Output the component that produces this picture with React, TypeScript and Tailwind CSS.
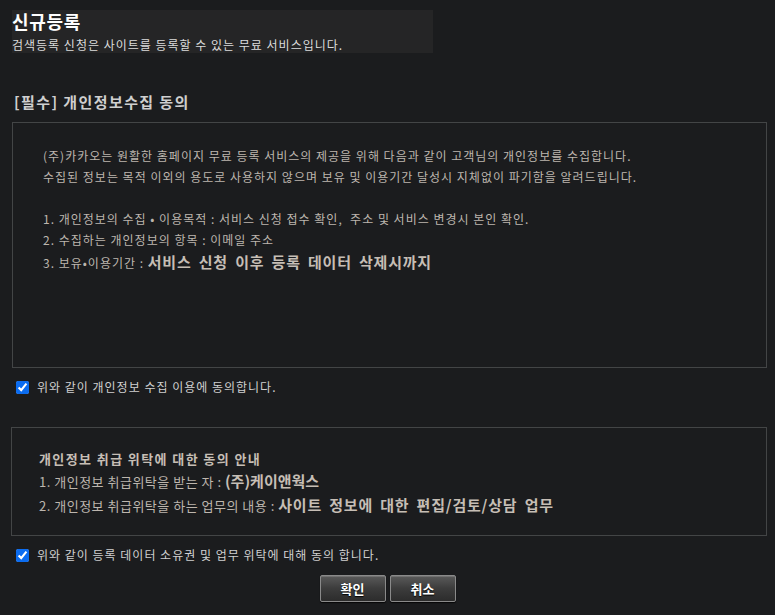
import React from "react";

const font = "font-['Noto_Sans_CJK_KR','Noto_Sans',sans-serif]";

const Btn = ({ label }: { label: string }) => (
  <button
    type="button"
    className="h-[27px] w-[66px] rounded-[2px] border border-[#8a8a8a] bg-gradient-to-b from-[#5a5a5a] via-[#3c3c3c] to-[#2c2c2c] text-[13px] font-bold leading-none text-white shadow-[0_1px_1px_rgba(0,0,0,0.8),inset_0_1px_0_rgba(255,255,255,0.15)] [text-shadow:0_1px_1px_#000]"
  >
    {label}
  </button>
);

export default function App() {
  const [agree1, setAgree1] = React.useState(true);
  const [agree2, setAgree2] = React.useState(true);

  return (
    <div className={`${font} min-h-[615px] w-[775px] bg-[#1b1c1e] pt-[10px] text-[#bdb6ae]`}>
      {/* header */}
      <div className="ml-[12px] h-[43px] w-[421px] bg-[#252526]">
        <h1 className="text-[18px] font-bold leading-[22px] tracking-[0.7px] text-white">신규등록</h1>
        <p className="mt-[5px] text-[12px] leading-[16px] tracking-[1px] text-[#dcdcdc]">
          검색등록 신청은 사이트를 등록할 수 있는 무료 서비스입니다.
        </p>
      </div>

      <h2 className="ml-[14px] mt-[40px] text-[15px] font-bold leading-[18px] tracking-[1.4px] text-[#cfcfcf]">
        [필수] 개인정보수집 동의
      </h2>

      {/* agreement box 1 */}
      <div className="ml-[12px] mt-[11px] h-[246px] w-[755px] border border-[#434546] pl-[30px] pt-[22px] text-[12px] leading-[21px] tracking-[1px]">
        <p>(주)카카오는 원활한 홈페이지 무료 등록 서비스의 제공을 위해 다음과 같이 고객님의 개인정보를 수집합니다.</p>
        <p>수집된 정보는 목적 이외의 용도로 사용하지 않으며 보유 및 이용기간 달성시 지체없이 파기함을 알려드립니다.</p>
        <p className="h-[21px]" />
        <p>1. 개인정보의 수집 • 이용목적 : 서비스 신청 접수 확인,&nbsp; 주소 및 서비스 변경시 본인 확인.</p>
        <p>2. 수집하는 개인정보의 항목 : 이메일 주소</p>
        <p className="leading-[24px]">
          3. 보유•이용기간 :{" "}
          <span className="text-[15px] font-bold tracking-[0.8px] [word-spacing:3px] text-[#c6beb5]">
            서비스 신청 이후 등록 데이터 삭제시까지
          </span>
        </p>
      </div>

      <label className="ml-[16px] mt-[10px] flex h-[18px] items-center gap-[8px] text-[12px] tracking-[1px] text-[#d0d0d0]">
        <input
          type="checkbox"
          checked={agree1}
          onChange={(e) => setAgree1(e.target.checked)}
          className="h-[13px] w-[13px] accent-[#0b6cf0]"
        />
        위와 같이 개인정보 수집 이용에 동의합니다.
      </label>

      {/* agreement box 2 */}
      <div className="ml-[11px] mt-[31px] h-[109px] w-[756px] border border-[#434546] pl-[27px] pt-[21px] text-[13px] leading-[23px] tracking-[0.5px]">
        <p className="font-bold leading-[20px] tracking-[1.4px] text-[#c6beb5]">개인정보 취급 위탁에 대한 동의 안내</p>
        <p>
          1. 개인정보 취급위탁을 받는 자 :{" "}
          <span className="text-[15px] font-bold tracking-normal text-[#c6beb5]">(주)케이앤웍스</span>
        </p>
        <p>
          2. 개인정보 취급위탁을 하는 업무의 내용 :{" "}
          <span className="text-[15px] font-bold tracking-[0.8px] [word-spacing:3px] text-[#c6beb5]">
            사이트 정보에 대한 편집/검토/상담 업무
          </span>
        </p>
      </div>

      <label className="ml-[16px] mt-[10px] flex h-[18px] items-center gap-[8px] text-[12px] tracking-[1px] text-[#d0d0d0]">
        <input
          type="checkbox"
          checked={agree2}
          onChange={(e) => setAgree2(e.target.checked)}
          className="h-[13px] w-[13px] accent-[#0b6cf0]"
        />
        위와 같이 등록 데이터 소유권 및 업무 위탁에 대해 동의 합니다.
      </label>

      <div className="mt-[11px] flex justify-center gap-[4px]">
        <Btn label="확인" />
        <Btn label="취소" />
      </div>
    </div>
  );
}
